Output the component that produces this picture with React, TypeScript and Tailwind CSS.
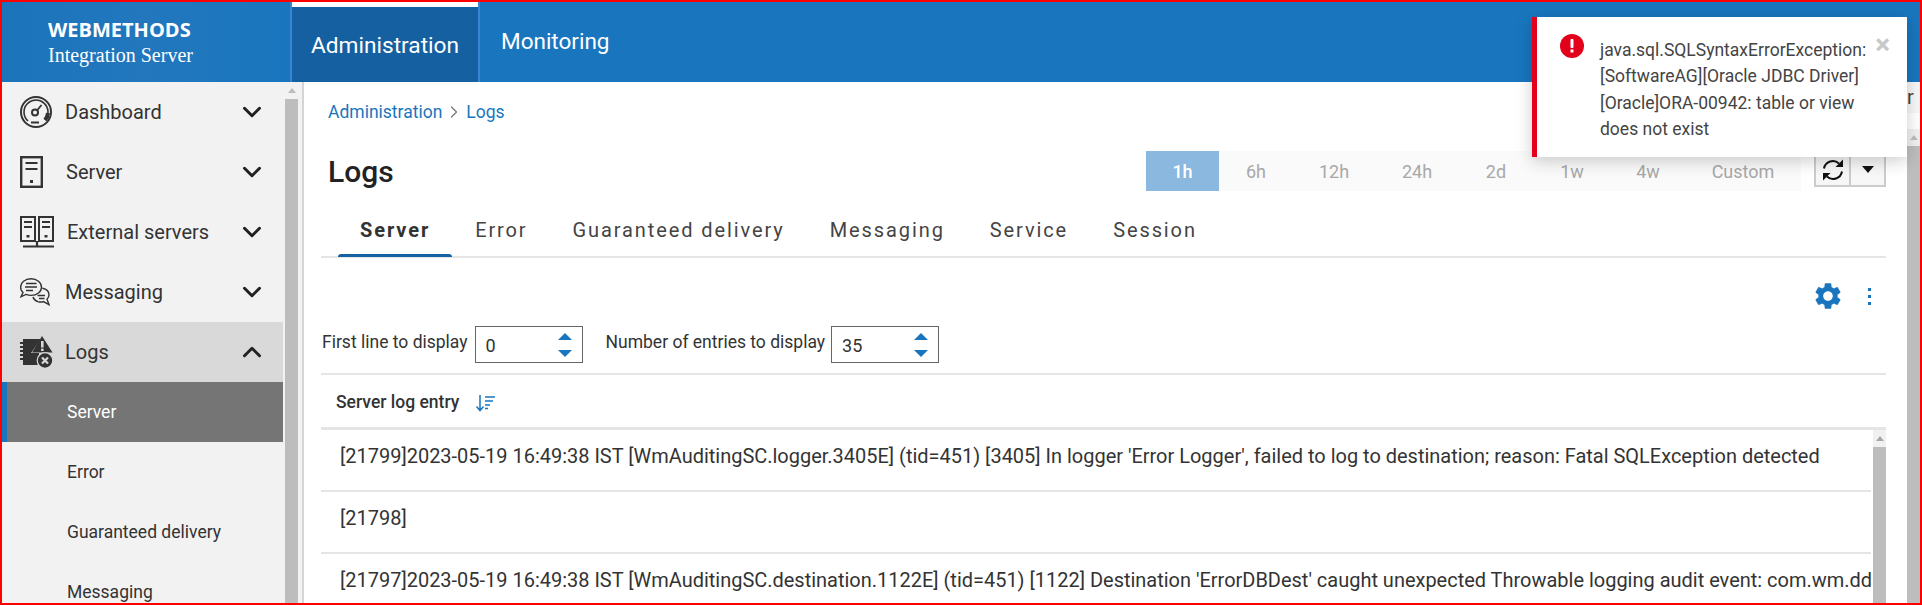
import { ChevronDown, ChevronRight, ChevronUp } from "lucide-react";
import { MdSettings } from "react-icons/md";
import type { ReactNode } from "react";

function GaugeIcon() {
  return (
    <svg width="32" height="32" viewBox="0 0 32 32" fill="none" stroke="#333" strokeWidth="1.6">
      <circle cx="16" cy="16" r="15" strokeWidth="2" />
      <path d="M8 25 A12 12 0 1 1 25 24" />
      <path d="M25 24 A12 12 0 0 0 28 17" strokeWidth="4" />
      <circle cx="15" cy="16.5" r="3" strokeWidth="2" />
      <path d="M17 14.5 L21.5 9" strokeWidth="1.8" />
      <path d="M11 26.5 H19" strokeWidth="2" />
    </svg>
  );
}

function ServerIcon() {
  return (
    <svg width="23" height="32" viewBox="0 0 23 32" fill="none" stroke="#333">
      <rect x="1.2" y="1.2" width="20.6" height="29.6" strokeWidth="2.4" />
      <path d="M5.5 7 H17.5 M5.5 13 H17.5" strokeWidth="2.2" />
      <rect x="10" y="24" width="3" height="3" fill="#333" stroke="none" />
    </svg>
  );
}

function ServersIcon() {
  return (
    <svg width="35" height="32" viewBox="0 0 35 32" fill="none" stroke="#333">
      <rect x="1" y="1" width="14" height="24" strokeWidth="2" />
      <rect x="19" y="1" width="14" height="24" strokeWidth="2" />
      <path d="M4 6 H12 M4 11 H12 M22 6 H30 M22 11 H30" strokeWidth="1.8" />
      <rect x="6.5" y="19" width="3" height="2.5" fill="#333" stroke="none" />
      <rect x="24.5" y="19" width="3" height="2.5" fill="#333" stroke="none" />
      <path d="M17 25 V30 M3 30.5 H34" strokeWidth="2.2" />
    </svg>
  );
}

function MessagesIcon() {
  return (
    <svg width="30" height="28" viewBox="0 0 30 28" fill="none" stroke="#333" strokeWidth="1.4">
      <path d="M11 0.8 C17 0.8 21.5 4.6 21.5 9.2 C21.5 13.8 17 17.4 11 17.4 C9.2 17.4 7.5 17 6 16.4 L1 18.8 L3 14.6 C1.4 13 0.6 11.2 0.6 9.2 C0.6 4.6 5 0.8 11 0.8 Z" />
      <path d="M6 5.6 H16.5 M5 9 H17 M6 12.4 H13" strokeWidth="1.5" />
      <path d="M22.4 10.2 C26.4 11 29 13.6 29 16.8 C29 18.6 28.2 20 27 21.2 L29 26.6 L23.4 23.6 C21.6 24.2 19.6 24.2 17.8 23.6 C15.6 22.8 13.6 21.2 13 19" />
      <path d="M17.5 17.5 H25 M19 20.5 H24.5" strokeWidth="1.4" />
    </svg>
  );
}

function LogsIcon() {
  return (
    <svg width="33" height="32" viewBox="0 0 33 32">
      <path d="M3 3 H21 L11 17 H19 V29 H3 Z" fill="#333" />
      <path d="M0 7 H4 M0 11 H4 M0 15 H4 M0 19 H4 M0 23 H4" stroke="#333" strokeWidth="2" />
      <path d="M22 0 L32.5 16.5 H12 Z" fill="#333" />
      <rect x="21" y="5" width="2.6" height="6.5" fill="#d9d9d9" />
      <rect x="21" y="12.6" width="2.6" height="2.4" fill="#d9d9d9" />
      <circle cx="25" cy="24.5" r="7.8" fill="#333" stroke="#d9d9d9" strokeWidth="1.2" />
      <path d="M22 21.5 L28 27.5 M28 21.5 L22 27.5" stroke="#d9d9d9" strokeWidth="2.2" />
    </svg>
  );
}

function SpinArrows() {
  return (
    <svg width="14" height="24" viewBox="0 0 14 24" fill="#1976be">
      <path d="M7 0 L14 7 H0 Z" />
      <path d="M0 17 H14 L7 24 Z" />
    </svg>
  );
}

function SortIcon() {
  return (
    <svg width="21" height="17" viewBox="0 0 21 17" fill="none" stroke="#1976be">
      <path d="M5 0 V15 M1.5 11.5 L5 15.5 L8.5 11.5" strokeWidth="1.5" />
      <path d="M10 2 H20 M10 6 H18 M10 10 H15 M10 13.5 H13" strokeWidth="1.6" />
    </svg>
  );
}

function RefreshIcon() {
  return (
    <svg width="22" height="22" viewBox="0 0 22 22" fill="none" stroke="#111" strokeWidth="2">
      <path d="M2 9.5 A9 9 0 0 1 17 4.5" />
      <path d="M20 12.5 A9 9 0 0 1 5 17.5" />
      <path d="M21 0.5 V8 H13.5 Z" fill="#111" stroke="none" />
      <path d="M1 21.5 V14 H8.5 Z" fill="#111" stroke="none" />
    </svg>
  );
}

type NavItem = { label: string; icon: ReactNode; iconBox: string; open?: boolean };

const navItems: NavItem[] = [
  { label: "Dashboard", icon: <GaugeIcon />, iconBox: "w-[45px]" },
  { label: "Server", icon: <ServerIcon />, iconBox: "w-[46px]" },
  { label: "External servers", icon: <ServersIcon />, iconBox: "w-[47px]" },
  { label: "Messaging", icon: <MessagesIcon />, iconBox: "w-[45px]" },
  { label: "Logs", icon: <LogsIcon />, iconBox: "w-[45px]", open: true },
];

const subItems = ["Server", "Error", "Guaranteed delivery", "Messaging"];

const ranges = [
  { label: "1h", w: "w-[73px]" },
  { label: "6h", w: "w-[74px]" },
  { label: "12h", w: "w-[82px]" },
  { label: "24h", w: "w-[84px]" },
  { label: "2d", w: "w-[74px]" },
  { label: "1w", w: "w-[78px]" },
  { label: "4w", w: "w-[74px]" },
  { label: "Custom", w: "w-[116px]" },
];

const tabs = ["Server", "Error", "Guaranteed delivery", "Messaging", "Service", "Session"];

const logRows = [
  "[21799]2023-05-19 16:49:38 IST [WmAuditingSC.logger.3405E] (tid=451) [3405] In logger 'Error Logger', failed to log to destination; reason: Fatal SQLException detected",
  "[21798]",
  "[21797]2023-05-19 16:49:38 IST [WmAuditingSC.destination.1122E] (tid=451) [1122] Destination 'ErrorDBDest' caught unexpected Throwable logging audit event: com.wm.dd",
];

function Sidebar() {
  return (
    <aside className="flex w-[300px] shrink-0 overflow-hidden bg-[#f2f2f2]">
      <div className="w-[281px] shrink-0">
        {navItems.map((item) => (
          <div
            key={item.label}
            className={`flex h-[60px] items-center pl-[18px] text-[20px] text-[#333] ${item.open ? "bg-[#d9d9d9]" : ""}`}
          >
            <span className={`flex shrink-0 items-center ${item.iconBox}`}>{item.icon}</span>
            <span className="flex-1">{item.label}</span>
            <span className="mr-[15px] flex w-[32px] justify-center text-[#222]">
              {item.open ? <ChevronUp size={30} strokeWidth={2.4} /> : <ChevronDown size={30} strokeWidth={2.4} />}
            </span>
          </div>
        ))}
        {subItems.map((label, i) => (
          <div
            key={label}
            className={`flex h-[60px] items-center text-[17.5px] ${
              i === 0
                ? "border-l-[5px] border-[#1976be] bg-[#757575] pl-[60px] text-white"
                : "pl-[65px] text-[#333]"
            }`}
          >
            {label}
          </div>
        ))}
      </div>
      <div className="ml-[2px] flex w-[13px] shrink-0 flex-col">
        <div className="flex h-[17px] items-center justify-center">
          <span className="h-0 w-0 border-x-[4px] border-b-[5px] border-x-transparent border-b-[#bdbdbd]" />
        </div>
        <div className="flex-1 bg-[#bdbdbd]" />
      </div>
    </aside>
  );
}

function Toast() {
  return (
    <div className="absolute top-[15px] right-[13px] flex h-[140px] w-[375px] border-l-[5px] border-[#e2001a] bg-white pt-[20px] pl-[23px] shadow-[0_4px_16px_rgba(0,0,0,0.2)]">
      <svg className="mt-[-3px] shrink-0" width="24" height="24" viewBox="0 0 24 24">
        <circle cx="12" cy="12" r="12" fill="#e2001a" />
        <rect x="10.5" y="5" width="3" height="9" rx="1" fill="#fff" />
        <rect x="10.5" y="15.5" width="3" height="3" fill="#fff" />
      </svg>
      <p className="ml-[16px] w-[274px] text-[17.5px] leading-[26.3px] text-[#444]">
        java.sql.SQLSyntaxErrorException: [SoftwareAG][Oracle JDBC Driver] [Oracle]ORA-00942: table or view does not exist
      </p>
      <span className="absolute top-[12px] right-[17px] text-[28px] leading-[32px] font-bold text-[#c8c8c8]">×</span>
    </div>
  );
}

function NumberField({ value }: { value: string }) {
  return (
    <div className="flex h-[37px] w-[108px] items-center justify-between border border-[#666] pr-[10px] pl-[10px] text-[18px] text-[#333]">
      <span className="pt-[2px]">{value}</span>
      <SpinArrows />
    </div>
  );
}

function Content() {
  return (
    <main className="flex min-w-0 flex-1 flex-col border-l-2 border-[#d5d5d5] bg-white pr-[21px] pl-[17px] text-[#333]">
      <div className="flex h-[60px] shrink-0 items-center pl-[7px] text-[17.5px] text-[#1976be]">
        <span>Administration</span>
        <ChevronRight size={20} className="mx-[2px] text-[#777]" strokeWidth={1.5} />
        <span>Logs</span>
      </div>

      <div className="flex h-[58px] shrink-0 items-center pl-[7px]">
        <h1 className="flex-1 text-[30px] font-medium text-[#222]">Logs</h1>
        <div className="flex h-[40px] bg-[#fafafa] text-[18px] text-[#a8a8a8]">
          {ranges.map((r, i) => (
            <span
              key={r.label}
              className={`flex items-center justify-center ${r.w} ${i === 0 ? "bg-[#8ab8de] font-medium text-white" : ""}`}
            >
              {r.label}
            </span>
          ))}
        </div>
        <div className="mt-[-3px] ml-[13px] flex h-[35px] w-[72px] border-2 border-[#ccc] bg-[#f7f7f7]">
          <span className="flex w-[33px] items-center justify-center">
            <RefreshIcon />
          </span>
          <span className="flex flex-1 items-center justify-center border-l-2 border-[#ccc]">
            <span className="h-0 w-0 border-x-[6px] border-t-[7px] border-x-transparent border-t-[#111]" />
          </span>
        </div>
      </div>

      <nav className="flex h-[58px] shrink-0 gap-[45px] border-b-2 border-[#e5e5e5] pt-[4px] pl-[39px] text-[20px] tracking-[1.9px]">
        {tabs.map((t, i) => (
          <span key={t} className={`relative flex items-center ${i === 0 ? "font-bold text-[#333]" : "text-[#444]"}`}>
            {t}
            {i === 0 && <span className="absolute -inset-x-[22px] -bottom-[1px] h-[3px] rounded-t-sm bg-[#1560a0]" />}
          </span>
        ))}
      </nav>

      <div className="flex h-[68px] shrink-0 items-center justify-end gap-[24px] pt-[8px] pr-[15px] text-[#1976be]">
        <MdSettings size={32} />
        <span className="flex flex-col gap-[4px]">
          <span className="h-[3px] w-[3px] bg-[#1976be]" />
          <span className="h-[3px] w-[3px] bg-[#1976be]" />
          <span className="h-[3px] w-[3px] bg-[#1976be]" />
        </span>
      </div>

      <div className="flex h-[49px] shrink-0 items-start border-b-2 border-[#e5e5e5] pl-[1px] text-[17.5px]">
        <span className="flex h-[33px] items-center">First line to display</span>
        <span className="ml-[7px]">
          <NumberField value="0" />
        </span>
        <span className="ml-[23px] flex h-[33px] items-center">Number of entries to display</span>
        <span className="ml-[6px]">
          <NumberField value="35" />
        </span>
      </div>

      <div className="flex h-[55px] shrink-0 items-center gap-[16px] border-b-[3px] border-[#e5e5e5] pt-[2px] pl-[15px] text-[17.5px] font-medium">
        <span>Server log entry</span>
        <span className="mt-[3px]">
          <SortIcon />
        </span>
      </div>

      <div className="flex min-h-0 flex-1">
        <div className="min-w-0 flex-1 overflow-hidden text-[19.98px] leading-[26px]">
          {logRows.map((row) => (
            <div key={row} className="h-[62px] overflow-hidden border-b-2 border-[#e5e5e5] pt-[13px] pl-[19px] whitespace-nowrap">
              {row}
            </div>
          ))}
        </div>
        <div className="ml-[2px] flex w-[13px] shrink-0 flex-col">
          <div className="flex h-[17px] items-center justify-center bg-[#f1f1f1]">
            <span className="h-0 w-0 border-x-[4px] border-b-[5px] border-x-transparent border-b-[#a8a8a8]" />
          </div>
          <div className="flex-1 bg-[#bdbdbd]" />
        </div>
      </div>
    </main>
  );
}

export default function App() {
  return (
    <div className="relative flex h-[605px] w-[1922px] flex-col overflow-hidden border-2 border-[#ff0000] bg-white font-[family-name:Roboto,sans-serif]">
      <header className="flex h-[80px] shrink-0 bg-[#1976be] text-white">
        <div className="flex w-[288px] shrink-0 flex-col justify-center bg-gradient-to-r from-[#1b74ba] via-[#2277bd] to-[#1976be] pl-[46px]">
          <span className="font-[family-name:'Open_Sans',sans-serif] text-[20px] leading-[26px] font-bold">WEBMETHODS</span>
          <span className="font-[family-name:'Liberation_Serif',serif] text-[20px] leading-[24px]">Integration Server</span>
        </div>
        <div className="flex w-[190px] shrink-0 flex-col border-x-2 border-[#3a85d0] bg-[#1560a0]">
          <span className="h-[5px] bg-white" />
          <span className="flex flex-1 items-center justify-center pt-[3px] text-[22.7px]">Administration</span>
        </div>
        <span className="flex items-center pl-[21px] text-[22.5px]">Monitoring</span>
      </header>

      <div className="flex min-h-0 flex-1">
        <Sidebar />
        <Content />
        <div className="flex w-[13px] shrink-0 flex-col">
          <div className="h-[31px] overflow-hidden bg-[#f7f7f7] text-[20px] leading-[31px] text-[#444]">r</div>
          <div className="h-[16px] bg-white" />
          <div className="flex h-[17px] items-center justify-center bg-[#f1f1f1]">
            <span className="h-0 w-0 border-x-[4px] border-b-[5px] border-x-transparent border-b-[#bdbdbd]" />
          </div>
          <div className="flex-1 bg-[#bdbdbd]" />
        </div>
      </div>

      <Toast />
    </div>
  );
}
